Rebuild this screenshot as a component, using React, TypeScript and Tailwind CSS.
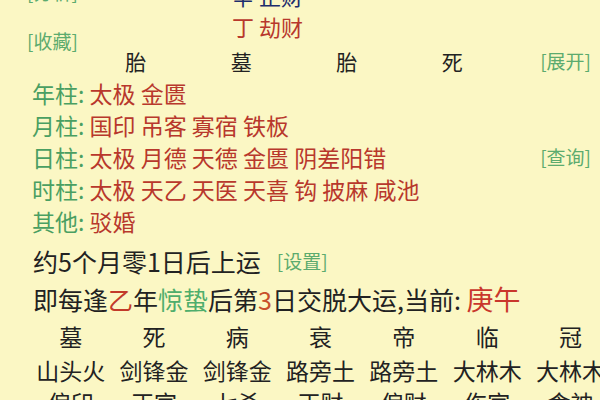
import React from "react";

const font = { fontFamily: '"Noto Sans CJK SC", "Noto Sans", sans-serif' };

const green = "text-[#4a9f62]";
const link = "text-[#5cab6e]";
const red = "text-[#b8382c]";

function Pillar({ label, items, right }: { label: string; items: string; right?: string }) {
  return (
    <div className="flex h-[32px] items-center pl-[32px] pr-[9px] text-[23px] leading-[32px]">
      <span className={green}>{label}: </span>
      <span className={`${red} whitespace-pre`}> {items}</span>
      {right && <span className={`ml-auto text-[19px] ${link}`}>{right}</span>}
    </div>
  );
}

const row1 = ["墓", "死", "病", "衰", "帝", "临", "冠"];
const row2 = ["山头火", "剑锋金", "剑锋金", "路旁土", "路旁土", "大林木", "大林木"];
const row3 = ["偏印", "正官", "七杀", "正财", "偏财", "伤官", "食神"];

export default function App() {
  return (
    <div
      className="w-[600px] h-[400px] overflow-hidden bg-[#fbf7c4] text-[#222222]"
      style={font}
    >
      {/* header */}
      <div className="flex mt-[-20px]">
        <div className="w-[83px] shrink-0 pl-[27px] flex flex-col">
          <div className={`h-[32px] leading-[32px] text-[19px] ${link} mt-[-4px]`}>[分析]</div>
          <div className={`h-[32px] leading-[32px] text-[19px] ${link} mt-[17px]`}>[收藏]</div>
        </div>
        <div className="flex-1 flex flex-col">
          <div className="h-[31px] leading-[31px] text-[22px] ml-[149px] text-[#1d2d6c]">辛 正财</div>
          <div className={`h-[31px] leading-[31px] text-[22px] ml-[149px] ${red}`}>丁 劫财</div>
          <div className="h-[32px] mt-[3px] flex items-center pr-[9px] text-[21px] leading-[32px]">
            {["胎", "墓", "胎", "死"].map((c, i) => (
              <div key={i} className="w-[105.5px] text-center">{c}</div>
            ))}
            <span className={`ml-auto text-[19px] ${link}`}>[展开]</span>
          </div>
        </div>
      </div>

      <Pillar label="年柱" items="太极 金匮" />
      <Pillar label="月柱" items="国印 吊客 寡宿 铁板" />
      <Pillar label="日柱" items="太极 月德 天德 金匮 阴差阳错" right="[查询]" />
      <Pillar label="时柱" items="太极 天乙 天医 天喜 钩 披麻 咸池" />
      <Pillar label="其他" items="驳婚" />

      <div className="mt-[7px] h-[34px] flex items-center pl-[33px] text-[25px] leading-[34px]">
        <span>约5个月零1日后上运</span>
        <span className={`ml-[16px] text-[19px] ${link}`}>[设置]</span>
      </div>
      <div className="h-[42px] flex items-center pl-[33px] text-[25px] leading-[42px] whitespace-pre">
        <span>即每逢</span>
        <span className="text-[#c23a2a]">乙</span>
        <span>年</span>
        <span className="text-[#4fae6c]">惊蛰</span>
        <span>后第</span>
        <span className="text-[#c8502c]">3</span>
        <span>日交脱大运,当前: </span>
        <span className="text-[27px] text-[#c9372c]">庚午</span>
      </div>

      <div className="pl-[29px] grid grid-cols-[repeat(7,83.3px)] w-[700px]">
        {row1.map((c, i) => (
          <div key={"a" + i} className="h-[32px] leading-[32px] text-center text-[23px]">{c}</div>
        ))}
        {row2.map((c, i) => (
          <div key={"b" + i} className="h-[32px] mt-[2px] leading-[32px] text-center text-[23px] whitespace-nowrap">{c}</div>
        ))}
        {row3.map((c, i) => (
          <div key={"c" + i} className="h-[32px] leading-[32px] text-center text-[23px]">{c}</div>
        ))}
      </div>
    </div>
  );
}
